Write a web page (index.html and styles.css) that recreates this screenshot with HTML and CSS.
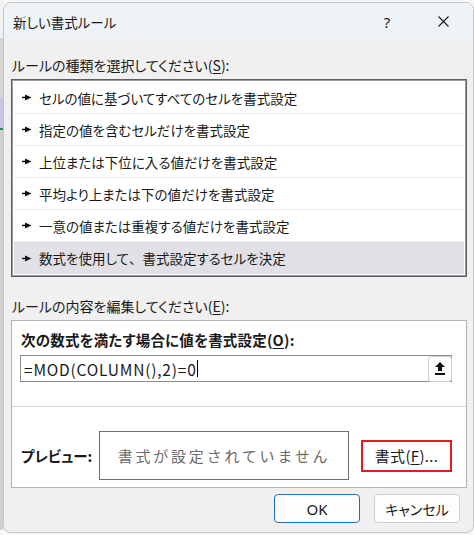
FILE: index.html
```html
<!DOCTYPE html>
<html lang="ja">
<head>
<meta charset="utf-8">
<title>新しい書式ルール</title>
<link rel="stylesheet" href="styles.css">
</head>
<body>
<div class="dialog">
  <div class="titlebar">
    <span class="title">新しい書式ルール</span>
    <span class="tb-btn help">?</span>
    <span class="tb-btn close">
      <svg width="11" height="11" viewBox="0 0 11 11"><path d="M0.5 0.5L10.5 10.5M10.5 0.5L0.5 10.5" stroke="#1a1a1a" stroke-width="1.1" fill="none"/></svg>
    </span>
  </div>
  <div class="body">
    <div class="label">ルールの種類を選択してください(<u>S</u>):</div>
    <div class="listbox">
      <div class="item"><svg class="arr" width="10" height="7" viewBox="0 0 10 7"><path d="M0 3.5H4" stroke="#111" stroke-width="1.4"/><polygon points="3,0.5 9.5,3.5 3,6.5" fill="#111"/></svg><span>セルの値に基づいてすべてのセルを書式設定</span></div>
      <div class="item"><svg class="arr" width="10" height="7" viewBox="0 0 10 7"><path d="M0 3.5H4" stroke="#111" stroke-width="1.4"/><polygon points="3,0.5 9.5,3.5 3,6.5" fill="#111"/></svg><span>指定の値を含むセルだけを書式設定</span></div>
      <div class="item"><svg class="arr" width="10" height="7" viewBox="0 0 10 7"><path d="M0 3.5H4" stroke="#111" stroke-width="1.4"/><polygon points="3,0.5 9.5,3.5 3,6.5" fill="#111"/></svg><span>上位または下位に入る値だけを書式設定</span></div>
      <div class="item"><svg class="arr" width="10" height="7" viewBox="0 0 10 7"><path d="M0 3.5H4" stroke="#111" stroke-width="1.4"/><polygon points="3,0.5 9.5,3.5 3,6.5" fill="#111"/></svg><span>平均より上または下の値だけを書式設定</span></div>
      <div class="item"><svg class="arr" width="10" height="7" viewBox="0 0 10 7"><path d="M0 3.5H4" stroke="#111" stroke-width="1.4"/><polygon points="3,0.5 9.5,3.5 3,6.5" fill="#111"/></svg><span>一意の値または重複する値だけを書式設定</span></div>
      <div class="item selected"><svg class="arr" width="10" height="7" viewBox="0 0 10 7"><path d="M0 3.5H4" stroke="#111" stroke-width="1.4"/><polygon points="3,0.5 9.5,3.5 3,6.5" fill="#111"/></svg><span>数式を使用して<span class="fw">、</span>書式設定するセルを決定</span></div>
    </div>
    <div class="label label2">ルールの内容を編集してください(<u>E</u>):</div>
    <div class="editbox">
      <div class="blabel">次の数式を満たす場合に値を書式設定(<u>O</u>):</div>
      <div class="formula">
        <span class="ftext">=MOD(COLUMN(),2)=0</span><span class="caret"></span>
        <span class="upbtn">
          <svg width="10" height="13" viewBox="0 0 10 13"><polygon points="5,0 10,5 7,5 7,9 3,9 3,5 0,5" fill="#111"/><rect x="0" y="11" width="10" height="2" fill="#111"/></svg>
        </span>
      </div>
      <div class="sep"></div>
      <div class="preview-row">
        <div class="blabel plabel">プレビュー:</div>
        <div class="preview">書式が設定されていません</div>
        <div class="fmt-wrap"><span class="fmt-btn">書式(<u>F</u>)...</span></div>
      </div>
    </div>
    <div class="buttons">
      <span class="btn ok">OK</span>
      <span class="btn">キャンセル</span>
    </div>
  </div>
</div>
</body>
</html>
```

FILE: styles.css
```css
html, body {
  margin: 0;
  padding: 0;
}
body {
  width: 474px;
  height: 535px;
  overflow: hidden;
  background-color: #f7f7f7;
  background-image: linear-gradient(to bottom, #f2f2f2 0, #f2f2f2 38px, #d4d4d4 38px, #d4d4d4 98px, #c7c7e4 98px, #c7c7e4 128px, #2e8a4e 128px, #2e8a4e 130px, #d0d0d0 130px, #d0d0d0 530px, #f7f7f7 530px);
  background-size: 3px 535px;
  background-repeat: no-repeat;
  font-family: "Noto Sans CJK JP", "Noto Sans", sans-serif;
  font-feature-settings: "palt";
  color: #1a1a1a;
  padding: 2px 0 0 3px;
  box-sizing: border-box;
}
.dialog {
  width: 471px;
  height: 531px;
  box-sizing: border-box;
  border: 1px solid #c4c4c4;
  border-radius: 8px;
  background: #f0f0f0;
  overflow: hidden;
  display: flex;
  flex-direction: column;
}
.titlebar {
  height: 37px;
  background: #eef3f8;
  display: flex;
  align-items: center;
  padding: 0 7px 0 9px;
  flex: none;
}
.title {
  flex: 1;
  font-size: 13.5px;
  line-height: 20px;
}
.tb-btn {
  width: 46px;
  height: 37px;
  display: flex;
  align-items: center;
  justify-content: center;
  font-size: 15px;
}
.help {
  margin-right: 10px;
  font-family: "Noto Sans", sans-serif;
  font-size: 15px;
}
.body {
  padding: 15px 0 0 7px;
  display: flex;
  flex-direction: column;
}
.label {
  font-size: 14px;
  line-height: 20px;
  padding-left: 1px;
}
.label2 {
  margin-top: 19px;
}
u {
  text-underline-offset: 2px;
}
.listbox {
  margin-top: 4px;
  width: 456px;
  height: 198px;
  box-sizing: border-box;
  border: 1px solid #5e5e64;
  box-shadow: inset 0 0 0 1px #9a9aa0;
  background: #fff;
  padding: 2px 2px;
  display: flex;
  flex-direction: column;
}
.item {
  height: 32px;
  box-sizing: border-box;
  border-bottom: 1px solid #ebebeb;
  display: flex;
  align-items: center;
  padding-left: 8px;
  font-size: 13.5px;
  line-height: 20px;
}
.item:last-child {
  border-bottom: none;
}
.item.selected {
  background: #e0e0e5;
}
.fw {
  font-feature-settings: normal;
}
.arr {
  margin-right: 7px;
  flex: none;
}
.editbox {
  margin-top: 4px;
  width: 456px;
  height: 168px;
  box-sizing: border-box;
  border: 1px solid #b4b4b4;
  background: #fff;
  padding: 9px 0 0 8px;
  display: flex;
  flex-direction: column;
}
.blabel {
  font-weight: bold;
  font-size: 14.5px;
  line-height: 20px;
  padding-left: 1px;
  letter-spacing: 0.2px;
}
.formula {
  margin-top: 5px;
  width: 432px;
  height: 27px;
  box-sizing: border-box;
  border: 1px solid #8c8c8c;
  display: flex;
  align-items: center;
  padding-left: 3px;
}
.ftext {
  font-size: 15.5px;
  line-height: 20px;
  letter-spacing: 0.8px;
}
.caret {
  width: 1px;
  height: 17px;
  background: #000;
  margin-left: 0;
}
.upbtn {
  margin-left: auto;
  margin-right: -1px;
  width: 24px;
  height: 26px;
  box-sizing: border-box;
  border: 1px solid #cdcdcd;
  border-radius: 3px;
  background: #fdfdfd;
  display: flex;
  align-items: center;
  justify-content: center;
}
.sep {
  margin: 24px 0 0 -8px;
  height: 1px;
  background: #d6d6d6;
  width: 454px;
}
.preview-row {
  margin-top: 24px;
  display: flex;
  align-items: center;
}
.plabel {
  width: 78px;
  flex: none;
  letter-spacing: 0;
}
.preview {
  width: 250px;
  height: 49px;
  box-sizing: border-box;
  border: 1px solid #6e6e6e;
  display: flex;
  align-items: center;
  justify-content: center;
  color: #6a6a6a;
  font-size: 15px;
  letter-spacing: 2.8px;
  font-feature-settings: normal;
}
.fmt-wrap {
  margin-left: 12px;
  width: 91px;
  height: 32px;
  box-sizing: border-box;
  border: 2px solid #e5191f;
  display: flex;
  align-items: center;
  justify-content: center;
}
.fmt-btn {
  font-size: 15px;
  line-height: 20px;
  letter-spacing: 0.3px;
}
.buttons {
  margin-top: 6px;
  display: flex;
  justify-content: flex-end;
  gap: 14px;
  padding-right: 13px;
}
.btn {
  width: 86px;
  height: 29px;
  box-sizing: border-box;
  border: 1px solid #d0d0d0;
  border-radius: 4px;
  background: #fdfdfd;
  display: flex;
  align-items: center;
  justify-content: center;
  font-size: 14px;
}
.btn.ok {
  border-color: #1b6fc4;
  font-family: "Noto Sans", sans-serif;
  font-size: 15px;
}
```
